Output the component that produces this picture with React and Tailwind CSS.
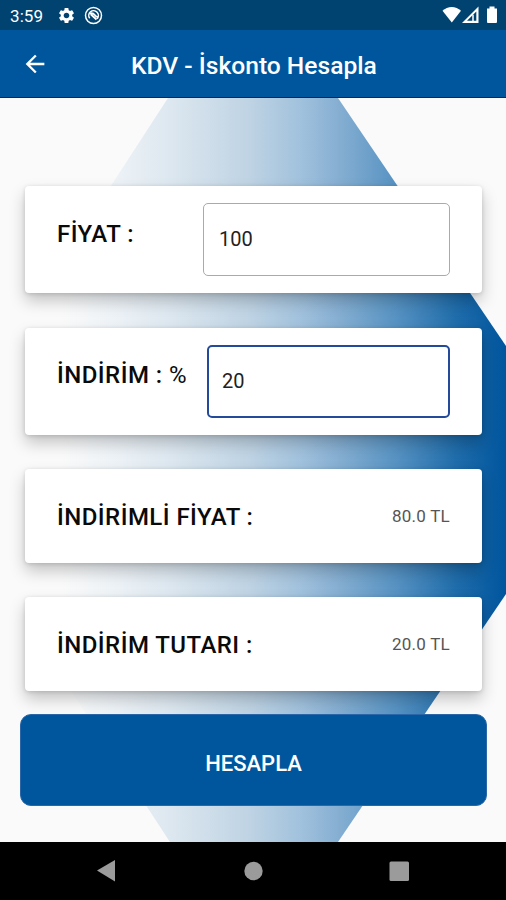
import React, { useState } from 'react'
import { MdArrowBack, MdSettings } from "react-icons/md";

const Backdrop = () => (
  <svg className='absolute inset-0' width="506" height="744" viewBox="0 98 506 744">
    <defs>
      <linearGradient id="fade" gradientUnits="userSpaceOnUse" x1="0" y1="0" x2="506" y2="0">
        <stop offset="0.12" stopColor="#fafafa" />
        <stop offset="0.22" stopColor="#eef3f7" />
        <stop offset="0.33" stopColor="#dee8f0" />
        <stop offset="0.5" stopColor="#bdd2e3" />
        <stop offset="0.6" stopColor="#9fc0dc" />
        <stop offset="0.68" stopColor="#81acd0" />
        <stop offset="0.78" stopColor="#5893c3" />
        <stop offset="0.9" stopColor="#206dab" />
        <stop offset="1" stopColor="#00559d" />
      </linearGradient>
    </defs>
    <path d="M168 98H338L590 470L338 842H170L-74 470Z" fill="url(#fade)" />
  </svg>
)

const StatusBar = () => (
  <div className='flex h-[30px] items-center justify-between bg-[#004270] pl-[10px] pr-[7px] text-white'>
    <div className='flex items-center'>
      <span className='w-[47px] pt-[2px] text-[17px] leading-none tracking-[0.1px]'>3:59</span>
      <MdSettings className='size-[19px]' />
      <svg className='ml-[8px]' width="19" height="19" viewBox="0 0 19 19" fill="none" stroke="currentColor">
        <circle cx="9.5" cy="9.5" r="8" strokeWidth="1.5" />
        <path d="M5.700 12.300A4.800 4.800 0 1 1 13 12.800" strokeWidth="1.500" />
        <path d="M5.300 7.800c2.500-1 4.200-.4 5.200.9s1.700 2.200 3.500 2.300M7 8.500l5.500 5" strokeWidth="1.800" />
      </svg>
    </div>
    <svg width="57" height="18" viewBox="0 0 57 18" fill="currentColor">
      <path d="M0.500 4.800C5.500-.4 14 -.4 19 4.800L9.800 16.500Z" />
      <path d="M36.500 0.500V17H20Z" />
      <path d="M34.300 5.500V14.800H25Z" fill="#004270" />
      <path d="M31 8.700V17" stroke="currentColor" strokeWidth="1.500" />
      <path d="M47.500 0.500h5v2h2.500v13.500a1 1 0 0 1-1 1h-8a1 1 0 0 1-1-1V2.500h2.500z" />
    </svg>
  </div>
)

const Card = ({ label, children, className }) => (
  <div className={`flex rounded-[4px] bg-white pl-8 pr-8 shadow-[0_8px_16px_rgba(0,0,0,0.22),0_1px_4px_rgba(0,0,0,0.14)] ${className}`}>
    <span className='whitespace-nowrap text-[24px] leading-7 font-medium tracking-[0.45px] text-[#0a0a0a]'>{label}</span>
    {children}
  </div>
)

const App = () => {

  const [price, setPrice] = useState("100")
  const [discount, setDiscount] = useState("20")
  const [result, setResult] = useState({ total: 80, saved: 20 })

  const calculate = () => {
    const saved = (Number(price) * Number(discount)) / 100
    setResult({ total: Number(price) - saved, saved })
  }

  return (
    <div className='flex h-[900px] w-[506px] flex-col overflow-hidden bg-[#fafafa] font-[Roboto,sans-serif]'>
      <StatusBar />
      <header className='flex h-[68px] items-center border-b border-[#001f87] bg-[#00569d] text-white'>
        <button className='w-[131px] pt-[1px] pl-[21px]'>
          <MdArrowBack className='size-[28px]' />
        </button>
        <h1 className='pt-[4px] text-[24.6px] leading-8 font-medium'>KDV - İskonto Hesapla</h1>
      </header>

      <main className='relative h-[744px]'>
        <Backdrop />
        <div className='relative flex flex-col pt-[88px] pl-[25px] pr-6'>
          <Card label="FİYAT :" className='h-[107px] justify-between pt-[34px]'>
            <input
              className='-mt-[17px] h-[73px] w-[247px] rounded-[5px] border border-[#aaa] px-[15px] pb-[2px] text-[20px] text-[#222] outline-none'
              value={price}
              onChange={(e) => setPrice(e.target.value)}
            />
          </Card>
          <Card label={<>İNDİRİM : <span className='font-normal'>%</span></>} className='mt-[35px] h-[107px] justify-between pt-[33px]'>
            <input
              className='-mt-4 h-[73px] w-[243px] rounded-[5px] border-2 border-[#234b99] px-[13px] pb-[2px] text-[20px] text-[#222] outline-none'
              value={discount}
              onChange={(e) => setDiscount(e.target.value)}
            />
          </Card>
          <Card label="İNDİRİMLİ FİYAT :" className='mt-[34px] h-[94px] items-center justify-between pt-[1px]'>
            <span className='pt-[1px] text-[17px] tracking-[0.25px] text-[#555]'>{result.total.toFixed(1)} TL</span>
          </Card>
          <Card label="İNDİRİM TUTARI :" className='mt-[34px] h-[94px] items-center justify-between pt-[1px]'>
            <span className='pt-[1px] text-[17px] tracking-[0.25px] text-[#555]'>{result.saved.toFixed(1)} TL</span>
          </Card>
          <button
            className='mt-[23px] -ml-[5px] h-[92px] w-[467px] rounded-[11px] border border-[#2a66a8] bg-[#00569d] pt-[6px] text-[22px] font-medium text-white'
            onClick={calculate}
          >
            HESAPLA
          </button>
        </div>
      </main>

      <nav className='flex h-[58px] items-center bg-black text-[#9b9b9b]'>
        <svg width="506" height="58" viewBox="0 0 506 58" fill="currentColor">
          <path d="M97 28.500L115 18V39.500Z" />
          <circle cx="253.500" cy="29" r="9.200" />
          <rect x="389.500" y="19.500" width="19.500" height="19.500" rx="1.500" />
        </svg>
      </nav>
    </div>
  )
}

export default App
